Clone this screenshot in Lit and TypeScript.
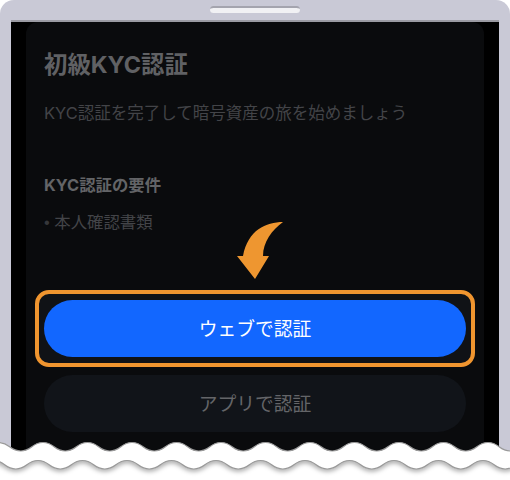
import { LitElement, html, css, svg } from "lit";
import { customElement } from "lit/decorators.js";

const wave = (y: number, peak: number) => {
  const p = 44.5;
  const a = 8.5;
  let x = peak - p * 2 - p / 2;
  let d = `M${x} ${y}`;
  for (let i = 0; i < 15; i++) {
    d += ` C${x + p * 0.25} ${y} ${x + p * 0.25} ${y - a} ${x + p * 0.5} ${y - a}`;
    d += ` C${x + p * 0.75} ${y - a} ${x + p * 0.75} ${y} ${x + p} ${y}`;
    x += p;
  }
  return d;
};

const top = wave(451, 43);
const bottom = wave(469, 38);

@customElement("app-root")
export class AppRoot extends LitElement {
  static styles = css`
    :host {
      display: block;
      width: 510px;
      height: 480px;
      overflow: hidden;
      position: relative;
      background: #fff;
      font-family: "Inter", "Liberation Sans", "Noto Sans CJK JP", sans-serif;
    }
    .frame {
      height: 480px;
      box-sizing: border-box;
      background: #c9c9d6;
      border-radius: 14px 14px 0 0;
      padding: 20px 11px 0;
      display: flex;
      flex-direction: column;
      position: relative;
    }
    .speaker {
      position: absolute;
      left: 210px;
      top: 6px;
      width: 90px;
      height: 7px;
      box-sizing: border-box;
      border-radius: 4px;
      background: #f1f1f4;
      border-top: 2px solid #a4a4ae;
    }
    .screen {
      flex: 1;
      background: #000;
      border-top: 2px solid #9b9ba3;
      padding: 0 15px;
      display: flex;
      flex-direction: column;
    }
    .card {
      flex: 1;
      background: #0a0b0d;
      border-radius: 12px 12px 0 0;
      padding: 28px 18px 0;
      display: flex;
      flex-direction: column;
      position: relative;
    }
    h1 {
      margin: 0;
      font-size: 23.4px;
      line-height: 30px;
      font-weight: 700;
      color: #606164;
    }
    .lead {
      margin: 20px 0 0;
      font-size: 16.5px;
      line-height: 26px;
      color: #434448;
    }
    h2 {
      margin: 48px 0 0;
      font-size: 16.4px;
      line-height: 22px;
      font-weight: 700;
      color: #636467;
    }
    .item {
      margin: 15px 0 0;
      font-size: 16.4px;
      line-height: 22px;
      color: #434448;
    }
    .dot {
      font-family: "Liberation Sans", sans-serif;
      color: #36373a;
    }
    .arrow {
      display: block;
      position: absolute;
      left: 210px;
      top: 200px;
    }
    .actions {
      margin-top: 67px;
      display: flex;
      flex-direction: column;
      gap: 18px;
    }
    .btn {
      width: 100%;
      height: 57px;
      box-sizing: border-box;
      border-radius: 29px;
      border: 0;
      padding: 0 0 3px;
      font: inherit;
      font-size: 18.8px;
      font-weight: 400;
      display: flex;
      align-items: center;
      justify-content: center;
    }
    .web {
      background: #1267ff;
      color: #fff;
    }
    .app {
      background: #111419;
      color: #646568;
    }
    .highlight {
      margin: -10px -9px;
      padding: 6px 5px;
      border: 4px solid #f0952f;
      border-radius: 14px;
      background: #101216;
    }
    .wave {
      position: absolute;
      left: 0;
      top: 0;
      pointer-events: none;
    }
  `;

  render() {
    return html`
      <div class="frame">
        <div class="speaker"></div>
        <div class="screen">
          <div class="card">
            <h1>初級KYC認証</h1>
            <p class="lead">KYC認証を完了して暗号資産の旅を始めましょう</p>
            <h2>KYC認証の要件</h2>
            <p class="item"><span class="dot">• </span>本人確認書類</p>
            <svg class="arrow" width="60" height="60" viewBox="0 0 60 60">
              <path d="M47 0C30 0 12 8 7 34H1L19 57L33 34H27C27 20 36 8 47 0Z" fill="#ee9630" />
            </svg>
            <div class="actions">
              <div class="highlight">
                <button class="btn web">ウェブで認証</button>
              </div>
              <button class="btn app">アプリで認証</button>
            </div>
          </div>
        </div>
      </div>
      <svg class="wave" width="510" height="480" viewBox="0 0 510 480">
        <defs>
          <filter id="s" x="-5%" y="-100%" width="110%" height="300%">
            <feGaussianBlur stdDeviation="2.5" />
          </filter>
          <clipPath id="below"><path d="${bottom} V500 H-100 Z" /></clipPath>
        </defs>
        ${svg`
          <path d="${top} V500 H-100 Z" fill="#fff" stroke="#999" stroke-width="1.2" />
          <g clip-path="url(#below)">
            <path d="${bottom}" fill="none" stroke="#000" stroke-opacity=".45" stroke-width="4" filter="url(#s)" />
          </g>
          <path d="${bottom}" fill="none" stroke="#999" stroke-width="1.2" />
        `}
      </svg>
    `;
  }
}
